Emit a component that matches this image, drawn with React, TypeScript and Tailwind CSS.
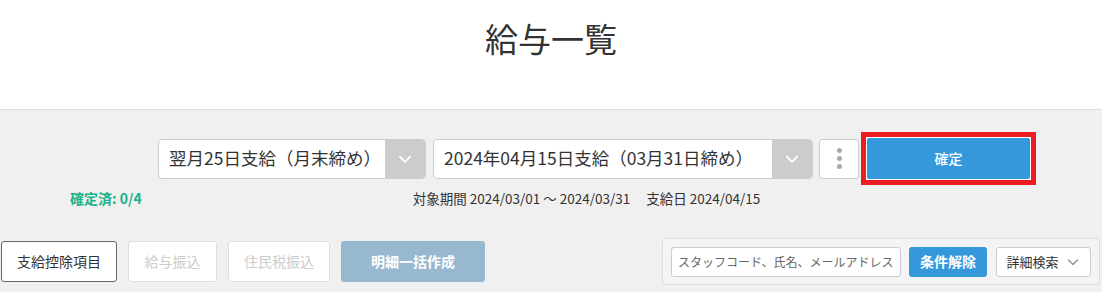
import React from "react";

const font = { fontFamily: '"Noto Sans CJK JP", "Noto Sans", sans-serif' };

function Chevron({ className }: { className?: string }) {
  return (
    <svg viewBox="0 0 16 16" className={className} fill="none" stroke="currentColor" strokeWidth="1.6" strokeLinecap="round" strokeLinejoin="round">
      <path d="M3.5 6l4.5 4.5L12.5 6" />
    </svg>
  );
}

function Select({ label, width }: { label: string; width: string }) {
  return (
    <div className={`flex h-[40px] ${width} overflow-hidden rounded-[4px] border border-[#cccccc] bg-white`}>
      <div className="flex flex-1 items-center pl-[10px] text-[17.5px] text-[#333333]">{label}</div>
      <div className="flex w-[40px] items-center justify-center bg-[#cccccc] text-white">
        <Chevron className="h-[18px] w-[18px]" />
      </div>
    </div>
  );
}

export default function App() {
  return (
    <div className="h-[292px] w-[1102px] overflow-hidden bg-[#f0f0f0]" style={font}>
      <div className="flex h-[110px] items-start justify-center border-b border-[#dddddd] bg-white pt-[14px]">
        <h1 className="text-[33px] leading-[48px] text-[#333333]">給与一覧</h1>
      </div>

      <div className="ml-[158px] mt-[22px] flex items-center">
        <Select label="翌月25日支給（月末締め）" width="w-[268px]" />
        <div className="w-[7px]" />
        <Select label="2024年04月15日支給（03月31日締め）" width="w-[380px]" />
        <div className="ml-[6px] flex h-[40px] w-[40px] flex-col items-center justify-center gap-[3px] rounded-[3px] border border-[#cccccc] bg-white">
          <span className="h-[5px] w-[5px] rounded-full bg-[#aaaaaa]" />
          <span className="h-[5px] w-[5px] rounded-full bg-[#aaaaaa]" />
          <span className="h-[5px] w-[5px] rounded-full bg-[#aaaaaa]" />
        </div>
        <div className="ml-[2px] border-[5px] border-[#ed1c24] bg-white p-px">
          <button className="flex h-[41px] w-[163px] items-center justify-center rounded-[2px] bg-[#3498db] text-[14px] font-medium text-white">
            確定
          </button>
        </div>
      </div>

      <div className="mt-[1px] flex h-[24px] items-center">
        <span className="ml-[70px] text-[14px] font-bold text-[#19b28a]">確定済: 0/4</span>
        <span className="ml-[271px] text-[13.5px] text-[#333333]">
          対象期間 2024/03/01 〜 2024/03/31<span className="ml-[16px]">支給日 2024/04/15</span>
        </span>
      </div>

      <div className="mt-[28px] flex items-center">
        <div className="ml-px flex items-center gap-[11px]">
          <button className="h-[41px] w-[116px] rounded-[3px] border border-[#666666] bg-white text-[14px] text-[#333333]">支給控除項目</button>
          <button className="h-[41px] w-[89px] rounded-[3px] border border-[#dddddd] bg-white text-[14px] text-[#cccccc]">給与振込</button>
          <button className="h-[41px] w-[102px] rounded-[3px] border border-[#dddddd] bg-white text-[14px] text-[#cccccc]">住民税振込</button>
          <button className="h-[41px] w-[144px] rounded-[3px] bg-[#98b8d0] text-[14px] font-bold text-white">明細一括作成</button>
        </div>
        <div className="ml-auto mr-[2px] flex h-[47px] w-[438px] items-center rounded-[3px] border border-[#dddddd] bg-[#f4f4f4] pl-[8px]">
          <input
            className="h-[30px] w-[230px] rounded-[3px] border border-[#cccccc] bg-white px-[6px] text-[12px] text-[#333333] placeholder:text-[#666666] focus:outline-none"
            placeholder="スタッフコード、氏名、メールアドレス"
          />
          <button className="ml-[8px] h-[30px] w-[78px] rounded-[3px] bg-[#3498db] text-[14px] font-bold text-white">条件解除</button>
          <button className="ml-[9px] flex h-[30px] w-[95px] items-center justify-center gap-[6px] rounded-[3px] border border-[#cccccc] bg-white text-[13px] text-[#333333]">
            詳細検索
            <Chevron className="h-[16px] w-[16px] text-[#999999]" />
          </button>
        </div>
      </div>
    </div>
  );
}
